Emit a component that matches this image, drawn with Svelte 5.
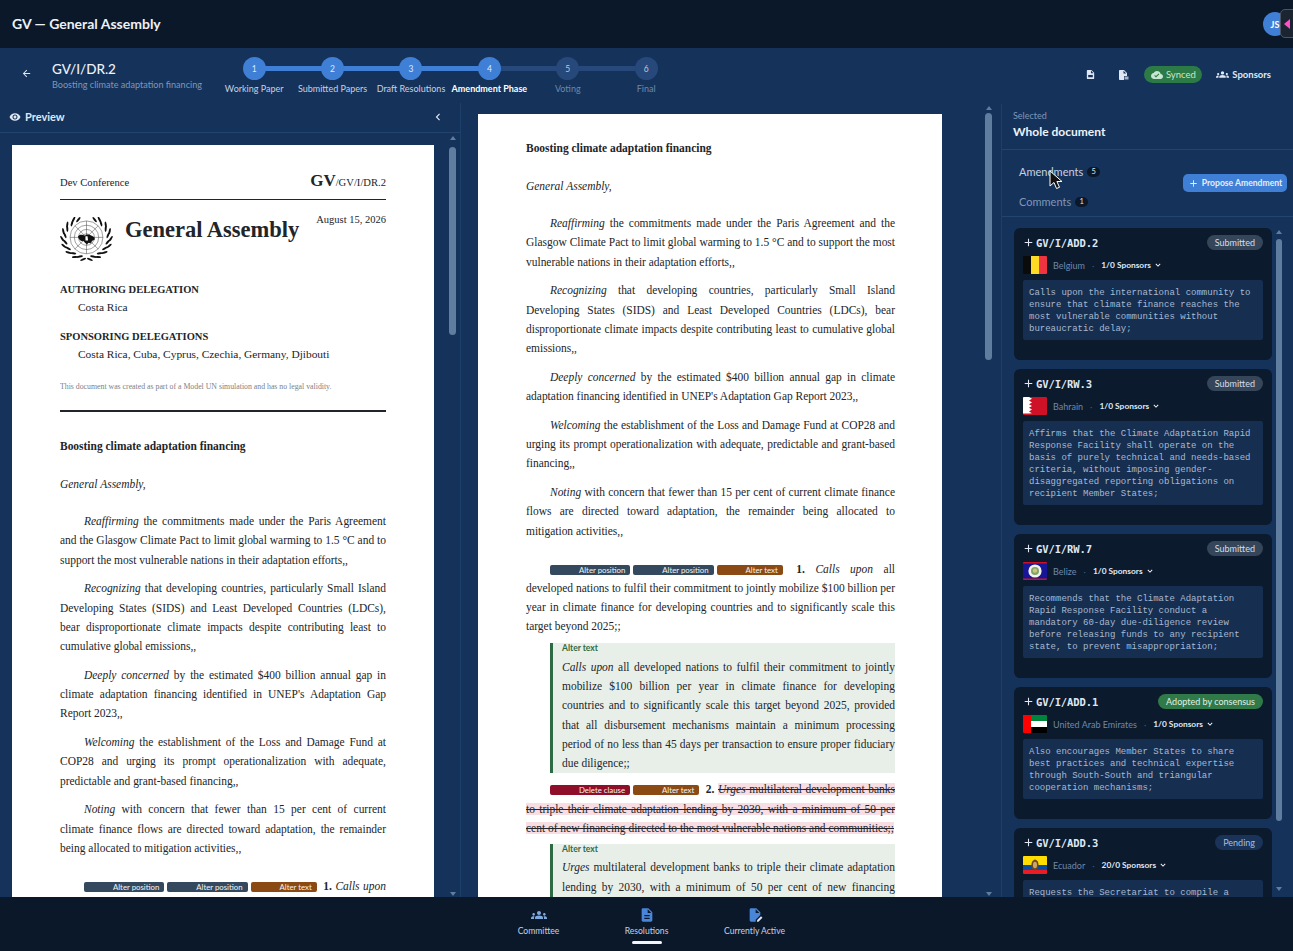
<script lang="ts">
  const steps = [
    { n: 1, label: 'Working Paper', done: true },
    { n: 2, label: 'Submitted Papers', done: true },
    { n: 3, label: 'Draft Resolutions', done: true },
    { n: 4, label: 'Amendment Phase', done: true, current: true },
    { n: 5, label: 'Voting' },
    { n: 6, label: 'Final' }
  ];

  const preambles = [
    ['Reaffirming', ' the commitments made under the Paris Agreement and the Glasgow Climate Pact to limit global warming to 1.5 °C and to support the most vulnerable nations in their adaptation efforts,,'],
    ['Recognizing', ' that developing countries, particularly Small Island Developing States (SIDS) and Least Developed Countries (LDCs), bear disproportionate climate impacts despite contributing least to cumulative global emissions,,'],
    ['Deeply concerned', ' by the estimated $400 billion annual gap in climate adaptation financing identified in UNEP\'s Adaptation Gap Report 2023,,'],
    ['Welcoming', ' the establishment of the Loss and Damage Fund at COP28 and urging its prompt operationalization with adequate, predictable and grant-based financing,,'],
    ['Noting', ' with concern that fewer than 15 per cent of current climate finance flows are directed toward adaptation, the remainder being allocated to mitigation activities,,']
  ];

  const amendments = [
    { id: 'GV/I/ADD.2', status: 'Submitted', kind: 'grey', flag: 'be', country: 'Belgium', sponsors: '1/0', text: 'Calls upon the international community to ensure that climate finance reaches the most vulnerable communities without bureaucratic delay;' },
    { id: 'GV/I/RW.3', status: 'Submitted', kind: 'grey', flag: 'bh', country: 'Bahrain', sponsors: '1/0', text: 'Affirms that the Climate Adaptation Rapid Response Facility shall operate on the basis of purely technical and needs-based criteria, without imposing gender-disaggregated reporting obligations on recipient Member States;' },
    { id: 'GV/I/RW.7', status: 'Submitted', kind: 'grey', flag: 'bz', country: 'Belize', sponsors: '1/0', text: 'Recommends that the Climate Adaptation Rapid Response Facility conduct a mandatory 60-day due-diligence review before releasing funds to any recipient state, to prevent misappropriation;' },
    { id: 'GV/I/ADD.1', status: 'Adopted by consensus', kind: 'green', flag: 'ae', country: 'United Arab Emirates', sponsors: '1/0', text: 'Also encourages Member States to share best practices and technical expertise through South-South and triangular cooperation mechanisms;' },
    { id: 'GV/I/ADD.3', status: 'Pending', kind: 'blue', flag: 'ec', country: 'Ecuador', sponsors: '20/0', text: 'Requests the Secretariat to compile a biennial report on the delivery of climate adaptation finance to Member States;' }
  ];

  const navItems = [
    { label: 'Committee', icon: 'groups' },
    { label: 'Resolutions', icon: 'doc', active: true },
    { label: 'Currently Active', icon: 'edit' }
  ];

  // laurel leaves around the emblem
  const leaves = [];
  for (let i = 0; i < 16; i++) {
    const a = 98 + i * 10;
    const r = (a * Math.PI) / 180;
    const rx = i % 2 ? 41 : 46;
    const ry = i % 2 ? 37 : 41;
    leaves.push({ x: 50 + rx * Math.cos(r), y: 39 + ry * Math.sin(r), a: a + 60 });
    leaves.push({ x: 50 - rx * Math.cos(r), y: 39 + ry * Math.sin(r), a: 180 - a - 60 });
  }

  const GROUPS = 'M12 12.75c1.63 0 3.07.39 4.24.9 1.08.48 1.76 1.56 1.76 2.73V18H6v-1.61c0-1.18.68-2.26 1.76-2.73 1.17-.52 2.61-.91 4.24-.91zM4 13c1.1 0 2-.9 2-2s-.9-2-2-2-2 .9-2 2 .9 2 2 2zm1.13 1.1c-.37-.06-.74-.1-1.13-.1-.99 0-1.93.21-2.78.58C.48 14.9 0 15.62 0 16.43V18h4.5v-1.61c0-.83.23-1.61.63-2.29zM20 13c1.1 0 2-.9 2-2s-.9-2-2-2-2 .9-2 2 .9 2 2 2zm4 3.43c0-.81-.48-1.53-1.22-1.85-.85-.37-1.79-.58-2.78-.58-.39 0-.76.04-1.13.1.4.68.63 1.46.63 2.29V18H24v-1.57zM12 6c1.66 0 3 1.34 3 3s-1.34 3-3 3-3-1.34-3-3 1.34-3 3-3z';
  const DOC = 'M14 2H6c-1.1 0-2 .9-2 2v16c0 1.1.9 2 2 2h12c1.1 0 2-.9 2-2V8l-6-6zm2 16H8v-2h8v2zm0-4H8v-2h8v2zm-3-5V3.5L18.5 9H13z';
</script>

{#snippet chip(label, cls)}<span class="chip {cls}">{label}</span>{/snippet}

{#snippet scrollbar(cls)}
  <div class="bar {cls}">
    <span class="arrow up"></span>
    <span class="thumb"></span>
    <span class="arrow down"></span>
  </div>
{/snippet}

{#snippet docBody()}
  <p class="title">Boosting climate adaptation financing</p>
  <p class="ga"><em>General Assembly,</em></p>
  {#each preambles as [lead, rest]}
    <p class="para"><em>{lead}</em>{rest}</p>
  {/each}

  <p class="para clause">{@render chip('Alter position', 'slate')}{@render chip('Alter position', 'slate')}{@render chip('Alter text', 'brown')} <b class="num">1.</b> <em>Calls upon</em> all developed nations to fulfil their commitment to jointly mobilize $100 billion per year in climate finance for developing countries and to significantly scale this target beyond 2025;;</p>
  <div class="alt">
    <div class="alt-label">Alter text</div>
    <p><em>Calls upon</em> all developed nations to fulfil their commitment to jointly mobilize $100 billion per year in climate finance for developing countries and to significantly scale this target beyond 2025, provided that all disbursement mechanisms maintain a minimum processing period of no less than 45 days per transaction to ensure proper fiduciary due diligence;;</p>
  </div>
  <p class="para clause2">{@render chip('Delete clause', 'red')}{@render chip('Alter text', 'brown')} <b class="num">2.</b> <span class="struck"><em>Urges</em> multilateral development banks to triple their climate adaptation lending by 2030, with a minimum of 50 per cent of new financing directed to the most vulnerable nations and communities;;</span></p>
  <div class="alt">
    <div class="alt-label">Alter text</div>
    <p><em>Urges</em> multilateral development banks to triple their climate adaptation lending by 2030, with a minimum of 50 per cent of new financing directed to the most vulnerable nations and communities;;</p>
  </div>
{/snippet}

{#snippet flag(code)}
  <svg class="flag" viewBox="0 0 24 18" preserveAspectRatio="none" aria-hidden="true">
    {#if code === 'be'}
      <rect width="8" height="18" fill="#0b0b0b" /><rect x="8" width="8" height="18" fill="#fdda24" /><rect x="16" width="8" height="18" fill="#ef3340" />
    {:else if code === 'bh'}
      <rect width="24" height="18" fill="#ce1126" />
      <path d="M0 0h6l3 1.8-3 1.8 3 1.8-3 1.8 3 1.8-3 1.8 3 1.8-3 1.8 3 1.8-3 .2H0z" fill="#fff" />
    {:else if code === 'bz'}
      <rect width="24" height="18" fill="#171696" /><rect width="24" height="1.5" fill="#ce1126" /><rect y="16.5" width="24" height="1.5" fill="#ce1126" />
      <circle cx="12" cy="9" r="6.6" fill="#f4f4ee" /><circle cx="12" cy="9" r="4" fill="#7da66d" /><circle cx="12" cy="8.6" r="2.2" fill="#d8c27a" />
    {:else if code === 'ae'}
      <rect width="24" height="6" fill="#00843d" /><rect y="6" width="24" height="6" fill="#fff" /><rect y="12" width="24" height="6" fill="#000" /><rect width="8" height="18" fill="#f00" />
    {:else}
      <rect width="24" height="9" fill="#fd0" /><rect y="9" width="24" height="4.5" fill="#034ea2" /><rect y="13.5" width="24" height="4.5" fill="#ed1c24" />
      <ellipse cx="12" cy="9" rx="3.6" ry="5.4" fill="#6d4a22" /><ellipse cx="12" cy="9" rx="2" ry="3.2" fill="#c9a86a" />
    {/if}
  </svg>
{/snippet}

<div class="app">
  <header class="topbar">
    <span class="brand">GV — General Assembly</span>
    <span class="avatar">JS</span>
  </header>

  <div class="subheader">
    <button class="back" aria-label="Back">
      <svg viewBox="0 0 24 24" width="11" height="11"><path d="M20 11H7.83l5.59-5.59L12 4l-8 8 8 8 1.41-1.41L7.83 13H20z" fill="currentColor" /></svg>
    </button>
    <div class="doc-title">
      <div class="symbol">GV/I/DR.2</div>
      <div class="subtitle">Boosting climate adaptation financing</div>
    </div>
    <ol class="stepper">
      {#each steps as s, i}
        <li class="step" class:done={s.done} class:current={s.current} class:next-done={steps[i + 1]?.done}>
          <span class="dot">{s.n}</span>
          <span class="step-label">{s.label}</span>
        </li>
      {/each}
    </ol>
    <div class="actions">
      <svg class="file-icon" viewBox="0 0 24 24" width="11" height="11"><path d="M14 2H6c-1.1 0-2 .9-2 2v16c0 1.1.9 2 2 2h12c1.1 0 2-.9 2-2V8l-6-6zm-1 7V3.5L18.5 9H13z" fill="currentColor" /><rect x="7" y="13" width="10" height="5" fill="#15325a" /></svg>
      <svg class="file-icon pdf" viewBox="0 0 24 24" width="12" height="12"><path d="M14 2H6c-1.1 0-2 .9-2 2v16c0 1.1.9 2 2 2h8v-8h6V8l-6-6zm-1 7V3.5L18.5 9H13z" fill="currentColor" /><rect x="15" y="15" width="8" height="6" fill="currentColor" opacity=".7" /></svg>
      <span class="synced">
        <svg viewBox="0 0 24 24" width="12" height="12"><path d="M19.35 10.04C18.67 6.59 15.64 4 12 4 9.11 4 6.6 5.64 5.35 8.04 2.34 8.36 0 10.91 0 14c0 3.31 2.69 6 6 6h13c2.76 0 5-2.24 5-5 0-2.64-2.05-4.78-4.65-4.96zM10 17l-3.5-3.5 1.41-1.41L10 14.17l5.18-5.18 1.41 1.41L10 17z" fill="currentColor" /></svg>
        Synced
      </span>
      <span class="sponsors-btn">
        <svg viewBox="0 0 24 24" width="13" height="13"><path d={GROUPS} fill="currentColor" /></svg>
        Sponsors
      </span>
    </div>
  </div>

  <main class="workspace">
    <section class="left">
      <div class="preview-head">
        <svg viewBox="0 0 24 24" width="12" height="12"><path d="M12 4.5C7 4.5 2.73 7.61 1 12c1.73 4.39 6 7.5 11 7.5s9.27-3.11 11-7.5c-1.73-4.39-6-7.5-11-7.5zM12 17c-2.76 0-5-2.24-5-5s2.24-5 5-5 5 2.24 5 5-2.24 5-5 5zm0-8c-1.66 0-3 1.34-3 3s1.34 3 3 3 3-1.34 3-3-1.34-3-3-3z" fill="currentColor" /></svg>
        <span>Preview</span>
        <svg class="collapse" viewBox="0 0 24 24" width="14" height="14"><path d="M15.41 7.41 14 6l-6 6 6 6 1.41-1.41L10.83 12z" fill="currentColor" /></svg>
      </div>
      <div class="pane">
        <div class="left-scroll">
          <article class="paper full">
            <div class="letterhead">
              <span class="conf">Dev Conference</span>
              <span class="sym"><b>GV</b>/GV/I/DR.2</span>
            </div>
            <div class="masthead">
              <svg class="emblem" viewBox="0 0 100 84" aria-hidden="true">
                <g fill="none" stroke="#222" stroke-width=".8">
                  <circle cx="50" cy="38" r="31" />
                  <circle cx="50" cy="38" r="23" />
                  <circle cx="50" cy="38" r="15" />
                  <circle cx="50" cy="38" r="7" />
                  <path d="M50 7v62M19 38h62M28 16l44 44M72 16 28 60" />
                </g>
                <path d="M34 36c4-5 9-3 13-1 2-3 7-3 11-1 6 2 9 5 7 9-4 0-5 3-8 7-2-3-4-2-6 2-3-3-5-5-7-7-5 1-9-3-10-9z" fill="#111" />
                <path d="M48 36h4l1 8h-5z" fill="#fff" />
                {#each leaves as l}
                  <ellipse cx={l.x} cy={l.y} rx="6" ry="1.9" fill="#111" transform="rotate({l.a} {l.x} {l.y})" />
                {/each}
              </svg>
              <h1>General Assembly</h1>
              <span class="date">August 15, 2026</span>
            </div>
            <div class="deleg-head">AUTHORING DELEGATION</div>
            <div class="deleg">Costa Rica</div>
            <div class="deleg-head second">SPONSORING DELEGATIONS</div>
            <div class="deleg">Costa Rica, Cuba, Cyprus, Czechia, Germany, Djibouti</div>
            <p class="disclaimer">This document was created as part of a Model UN simulation and has no legal validity.</p>
            <hr />
            {@render docBody()}
          </article>
        </div>
        {@render scrollbar('bar-left')}
      </div>
    </section>

    <section class="center">
      <div class="center-scroll">
        <article class="paper wide">
          {@render docBody()}
        </article>
      </div>
      {@render scrollbar('bar-center')}
    </section>

    <aside class="right">
      <div class="selected">
        <div class="sel-label">Selected</div>
        <div class="sel-value">Whole document</div>
      </div>
      <div class="tabs-row">
        <div class="tabs">
          <div class="tab active">Amendments <span class="count">5</span></div>
          <div class="tab">Comments <span class="count">1</span></div>
        </div>
        <button class="propose">
          <svg viewBox="0 0 24 24" width="11" height="11"><path d="M19 13h-6v6h-2v-6H5v-2h6V5h2v6h6v2z" fill="currentColor" /></svg>
          Propose Amendment
        </button>
      </div>
      <div class="pane">
        <div class="list">
          {#each amendments as a}
            <div class="card">
              <div class="card-head">
                <span class="card-id">
                  <svg viewBox="0 0 24 24" width="13" height="13"><path d="M19 13h-6v6h-2v-6H5v-2h6V5h2v6h6v2z" fill="currentColor" /></svg>
                  {a.id}
                </span>
                <span class="status {a.kind}">{a.status}</span>
              </div>
              <div class="meta">
                {@render flag(a.flag)}
                <span class="country">{a.country}</span>
                <span class="sep">·</span>
                <span class="spons">{a.sponsors} Sponsors</span>
                <svg viewBox="0 0 24 24" width="10" height="10"><path d="M7.41 8.59 12 13.17l4.59-4.58L18 10l-6 6-6-6z" fill="#fff" /></svg>
              </div>
              <div class="clause-text">{a.text}</div>
            </div>
          {/each}
        </div>
        {@render scrollbar('bar-right')}
      </div>
    </aside>
  </main>

  <nav class="bottom">
    {#each navItems as item}
      <div class="nav-item" class:active={item.active}>
        <svg viewBox="0 0 24 24" width="16" height="16">
          {#if item.icon === 'groups'}
            <path d={GROUPS} fill="#7fa8dc" />
          {:else if item.icon === 'doc'}
            <path d={DOC} fill="#4a86d8" />
          {:else}
            <path d="M14 2H6c-1.1 0-2 .9-2 2v16c0 1.1.9 2 2 2h7v-3l7-7V8l-6-6zm-1 7V3.5L18.5 9H13z" fill="#4a86d8" />
            <path d="M15 22v-2.2l6-6 2.2 2.2-6 6z" fill="#dfe8f4" />
          {/if}
        </svg>
        <span>{item.label}</span>
      </div>
    {/each}
  </nav>

  <!-- dev tool toggle and the mouse pointer sit on top of the page -->
  <div class="dev-toggle"><span></span></div>
  <svg class="pointer" viewBox="0 0 14 20" width="14" height="20"><path d="M1 1v15l4-3.5 2.5 6 3-1.2-2.6-5.8H13z" fill="#111" stroke="#fff" stroke-width="1" /></svg>
</div>

<style>
  :global(body) {
    background: #15325a;
    font-family: "Lato", "Noto Sans", sans-serif;
    overflow: hidden;
  }

  .app,
  .app * {
    box-sizing: border-box;
  }

  .app {
    position: relative;
    height: 951px;
    display: flex;
    flex-direction: column;
    color: #fff;
    overflow: hidden;
  }

  .topbar {
    height: 48px;
    flex: none;
    display: flex;
    align-items: center;
    justify-content: space-between;
    padding: 0 6px 0 12px;
    background: #0b1829;
  }

  .brand {
    font-size: 14px;
    font-weight: 700;
    color: #eef2f7;
    padding-bottom: 2px;
  }

  .avatar {
    width: 24px;
    height: 24px;
    border-radius: 50%;
    background: #3f7fd6;
    font-size: 9px;
    font-weight: 700;
    display: flex;
    align-items: center;
    justify-content: center;
  }

  .subheader {
    height: 55px;
    flex: none;
    display: flex;
    align-items: flex-start;
    background: #15325a;
  }

  .back {
    width: 52px;
    margin-top: 20px;
    padding: 0;
    background: none;
    border: 0;
    color: #dfe8f4;
    display: flex;
    justify-content: center;
  }

  .doc-title {
    width: 163px;
    margin-top: 13px;
  }

  .symbol {
    font-size: 13.5px;
    font-weight: 500;
    line-height: 17px;
    color: #eef2f7;
  }

  .subtitle {
    font-size: 9.1px;
    line-height: 13px;
    color: #7f97b8;
    white-space: nowrap;
  }

  .stepper {
    list-style: none;
    margin: 9px 0 0;
    padding: 0;
    display: flex;
  }

  .step {
    position: relative;
    width: 78.4px;
    display: flex;
    flex-direction: column;
    align-items: center;
  }

  .step:not(:last-child)::after {
    content: '';
    position: absolute;
    left: 50%;
    width: 100%;
    top: 9px;
    height: 5px;
    background: #27487a;
  }

  .step.next-done::after {
    background: #3f7fd6;
  }

  .dot {
    position: relative;
    z-index: 1;
    width: 23px;
    height: 23px;
    border-radius: 50%;
    background: #27487a;
    color: #b9c8dc;
    font-size: 8.5px;
    display: flex;
    align-items: center;
    justify-content: center;
  }

  .step.done .dot {
    background: #3f7fd6;
    color: #dfe9f7;
  }

  .step-label {
    margin-top: 2px;
    font-size: 9px;
    line-height: 13px;
    color: #6f88aa;
    white-space: nowrap;
  }

  .step.done .step-label {
    color: #c5d1e2;
  }

  .step.current .step-label {
    color: #fff;
    font-weight: 700;
  }

  .actions {
    margin-left: auto;
    margin-top: 18px;
    padding-right: 22px;
    display: flex;
    align-items: center;
    color: #dfe8f4;
  }

  .file-icon {
    margin-right: 21px;
  }

  .file-icon.pdf {
    margin-right: 15px;
  }

  .synced {
    height: 17px;
    width: 58px;
    border-radius: 9px;
    background: #2c7a46;
    display: flex;
    align-items: center;
    justify-content: center;
    gap: 3px;
    font-size: 9.5px;
    color: #c9e6d3;
  }

  .sponsors-btn {
    margin-left: 14px;
    display: flex;
    align-items: center;
    gap: 3px;
    font-size: 9.5px;
    font-weight: 700;
  }

  .workspace {
    flex: 1;
    min-height: 0;
    display: flex;
  }

  .left {
    width: 461px;
    flex: none;
    display: flex;
    flex-direction: column;
    border-right: 1px solid #1f3f6b;
  }

  .preview-head {
    height: 30px;
    flex: none;
    display: flex;
    align-items: center;
    gap: 4px;
    padding: 0 16px 2px 9px;
    font-size: 11px;
    font-weight: 700;
    color: #dfe8f4;
    border-bottom: 1px solid #23446f;
  }

  .collapse {
    margin-left: auto;
    margin-right: -1px;
  }

  .pane {
    flex: 1;
    min-height: 0;
    display: flex;
  }

  .left-scroll,
  .center-scroll,
  .list {
    overflow: hidden;
    height: 100%;
  }

  .left-scroll {
    width: 449px;
    padding: 12px 15px 0 12px;
  }

  .center {
    width: 540px;
    flex: none;
    display: flex;
    min-height: 0;
  }

  .center-scroll {
    width: 524px;
    padding: 11px 43px 0 17px;
  }

  .paper {
    background: #fff;
    color: #212529;
    font-family: "Liberation Serif", serif;
    font-size: 11.46px;
    line-height: 19.3px;
    padding: 25px 48px 48px;
  }

  .paper.full {
    padding-top: 29px;
  }

  .paper.wide {
    padding-right: 47px;
  }

  /* the scrollbars are drawn: headless chrome hides the native ones */
  .bar {
    flex: none;
    width: 7px;
    display: flex;
    flex-direction: column;
    align-items: center;
    height: 100%;
  }

  .thumb {
    width: 100%;
    border-radius: 4px;
    background: #5f7d9f;
  }

  .arrow {
    width: 0;
    height: 0;
    border-left: 3.5px solid transparent;
    border-right: 3.5px solid transparent;
  }

  .arrow.up {
    border-bottom: 4px solid #5f7d9f;
  }

  .arrow.down {
    margin-top: auto;
    border-top: 4px solid #5f7d9f;
  }

  .bar-left { padding: 3px 0 1px; }
  .bar-left .thumb { height: 188px; margin-top: 7px; }

  .bar-center { padding: 3px 0 1px; }
  .bar-center .thumb { height: 247px; margin-top: 3px; }

  .bar-right { width: 6px; padding: 13px 0 6px; margin-left: 2px; }
  .bar-right .thumb { height: 582px; margin-top: 5px; }

  .letterhead {
    display: flex;
    justify-content: space-between;
    align-items: baseline;
    border-bottom: 1px solid #212529;
    padding-bottom: 10px;
    font-size: 10.6px;
    line-height: 13px;
  }

  .sym b {
    font-size: 17px;
  }

  .masthead {
    display: flex;
    align-items: flex-start;
    margin-top: 17px;
  }

  .emblem {
    width: 53px;
    height: 45px;
    flex: none;
    margin-right: 12px;
  }

  h1 {
    margin: -1px 0 0;
    font-size: 22.5px;
    line-height: 28px;
    font-weight: 700;
    white-space: nowrap;
  }

  .date {
    margin: -4px 0 0 auto;
    font-size: 10.5px;
    line-height: 13px;
    white-space: nowrap;
  }

  .deleg-head {
    margin-top: 21px;
    font-size: 10.5px;
    font-weight: 700;
    line-height: 13px;
  }

  .deleg-head.second {
    margin-top: 16px;
  }

  .deleg {
    margin: 4px 0 0 18px;
    font-size: 11.4px;
    line-height: 14px;
  }

  .disclaimer {
    margin: 21px 0 0;
    font-size: 7.8px;
    line-height: 10px;
    color: #7b8188;
  }

  hr {
    margin: 18px 0 25px;
    border: 0;
    height: 2px;
    background: #212529;
  }

  .title {
    margin: 0 0 18.4px;
    font-weight: 700;
  }

  .ga {
    margin: 0 0 18px;
  }

  .para {
    margin: 0 0 9.4px;
    text-align: justify;
    text-indent: 24px;
  }

  .para.clause {
    margin: 18.5px 0 6.5px;
  }

  .para.clause2 {
    margin: 7px 0 5.5px;
  }

  .chip {
    display: inline-block;
    font-family: "Lato", sans-serif;
    font-size: 7.8px;
    line-height: 10px;
    padding: 0 5px;
    border-radius: 2px;
    color: #f4f4f4;
    margin-right: 3px;
    vertical-align: 0;
  }

  .slate { background: #34495e; }
  .brown { background: #8b4a13; }
  .red { background: #8f0f2a; }

  .struck {
    background: #f8dde3;
    text-decoration: line-through;
  }

  .alt {
    margin: 0 0 0 24px;
    padding: 0 0 0 9px;
    background: #e8efe9;
    border-left: 3px solid #2e6b45;
  }

  .alt-label {
    font-family: "Lato", sans-serif;
    font-size: 8.5px;
    font-weight: 700;
    line-height: 11px;
    color: #2e6b45;
  }

  .alt p {
    margin: 0;
    padding-top: 3.5px;
    text-align: justify;
  }

  .right {
    flex: 1;
    min-width: 0;
    display: flex;
    flex-direction: column;
    border-left: 1px solid #1f3f6b;
    margin-top: 1px;
  }

  .selected {
    height: 46px;
    flex: none;
    padding: 6px 11px 0;
    border-bottom: 1px solid #23446f;
  }

  .sel-label {
    font-size: 9px;
    line-height: 12px;
    color: #7f97b8;
  }

  .sel-value {
    font-size: 12px;
    line-height: 18px;
    margin-top: 1px;
    font-weight: 700;
    color: #eef2f7;
  }

  .tabs-row {
    height: 67px;
    flex: none;
    display: flex;
    align-items: center;
    justify-content: space-between;
    padding: 0 6px 0 17px;
    border-bottom: 1px solid #23446f;
  }

  .tabs {
    display: flex;
    flex-direction: column;
    gap: 15px;
    margin-top: 7px;
  }

  .tab {
    font-size: 11px;
    line-height: 15px;
    color: #7f97b8;
    display: flex;
    align-items: center;
    gap: 4px;
  }

  .tab.active {
    color: #c5d1e2;
  }

  .count {
    min-width: 13px;
    height: 10px;
    border-radius: 5px;
    background: #0b1829;
    color: #dfe8f4;
    font-size: 7.5px;
    display: inline-flex;
    align-items: center;
    justify-content: center;
  }

  .propose {
    height: 18px;
    width: 104px;
    border: 0;
    border-radius: 5px;
    background: #3f7fd6;
    color: #e6eef9;
    font-family: inherit;
    font-size: 8.6px;
    font-weight: 700;
    padding: 0;
    display: flex;
    align-items: center;
    justify-content: center;
    gap: 3px;
  }

  .list {
    width: 272px;
    padding: 11px 2px 0 12px;
    display: flex;
    flex-direction: column;
    gap: 9px;
  }

  .card {
    flex: none;
    padding: 7px 9px 20px;
    background: #0c1a2e;
    border-radius: 6px;
  }

  .card-head {
    display: flex;
    align-items: center;
    justify-content: space-between;
    height: 15px;
  }

  .card-id {
    font-family: "DejaVu Sans Mono", monospace;
    font-size: 10.5px;
    font-weight: 700;
    color: #dfe8f4;
    display: flex;
    align-items: center;
    gap: 1px;
    margin-left: -1px;
    letter-spacing: -.01em;
  }

  .status {
    height: 15px;
    padding: 0 8px;
    border-radius: 8px;
    font-size: 9px;
    display: flex;
    align-items: center;
    color: #d5dde8;
  }

  .status.grey { background: #36465a; }
  .status.green { background: #2f7a48; color: #e1f1e6; }
  .status.blue { background: #1a3358; color: #a9bdd8; }

  .meta {
    margin-top: 6px;
    height: 18px;
    display: flex;
    align-items: center;
    font-size: 9px;
  }

  .flag {
    width: 24px;
    height: 18px;
    border-radius: 1px;
    margin-right: 6px;
    flex: none;
  }

  .country {
    color: #6f88aa;
  }

  .sep {
    margin: 0 7px;
    color: #3b5578;
  }

  .spons {
    font-size: 8.4px;
    font-weight: 700;
    color: #dfe8f4;
    margin-right: 2px;
  }

  .clause-text {
    margin-top: 6px;
    padding: 7px 5px 5px 6px;
    background: #162e50;
    border-radius: 2px;
    font-family: "Liberation Mono", monospace;
    font-size: 9px;
    line-height: 12px;
    color: #a8b9d0;
  }

  .bottom {
    height: 54px;
    flex: none;
    display: flex;
    justify-content: center;
    background: #0b1829;
  }

  .nav-item {
    position: relative;
    width: 108px;
    padding-top: 10px;
    display: flex;
    flex-direction: column;
    align-items: center;
    gap: 2px;
    font-size: 8.6px;
    line-height: 13px;
    color: #c5d1e2;
  }

  .nav-item.active::after {
    content: '';
    position: absolute;
    bottom: 7px;
    width: 30px;
    height: 3px;
    border-radius: 2px;
    background: #f2f5f9;
  }

  .dev-toggle {
    position: absolute;
    top: 9px;
    right: -6px;
    width: 19px;
    height: 29px;
    border-radius: 5px;
    border: 1px solid #4a5668;
    background: #1b2431;
    display: flex;
    align-items: center;
    padding-left: 3px;
  }

  .dev-toggle span {
    width: 0;
    height: 0;
    border-top: 5px solid transparent;
    border-bottom: 5px solid transparent;
    border-right: 6px solid #ff4fc4;
  }

  .pointer {
    position: absolute;
    left: 1049px;
    top: 170px;
  }
</style>
